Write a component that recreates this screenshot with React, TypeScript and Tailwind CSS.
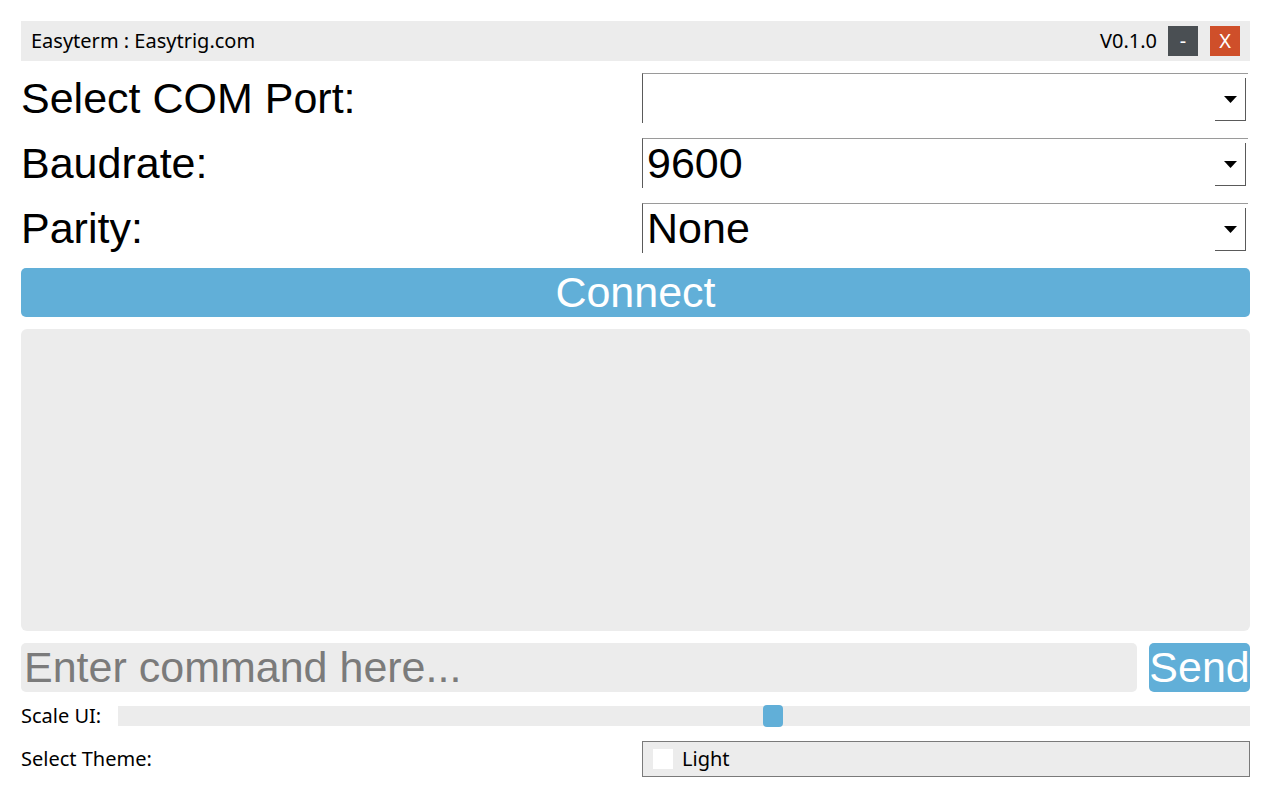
const SANS = "font-['Noto_Sans',sans-serif]";
const ARIAL = "font-['Liberation_Sans',Arial,sans-serif]";

function Combo({ value }: { value?: string }) {
  return (
    <div className="flex h-[50px] w-[606px] items-stretch border-l border-t border-l-[#5a5a5a] border-t-[#9a9a9a] bg-white">
      <div className={`flex flex-1 items-center pl-[4px] text-[43px] leading-none text-black ${ARIAL}`}>
        {value}
      </div>
      <div className="mb-[2px] mr-[2px] mt-[4px] flex w-[31px] items-center justify-center border-b border-r border-[#5a5a5a]">
        <svg width="13" height="7" viewBox="0 0 13 7">
          <path d="M0 0h13L6.5 7z" fill="#000" />
        </svg>
      </div>
    </div>
  );
}

export default function App() {
  const rows: { label: string; value?: string }[] = [
    { label: "Select COM Port:" },
    { label: "Baudrate:", value: "9600" },
    { label: "Parity:", value: "None" },
  ];

  return (
    <div className="min-h-[795px] w-[1272px] bg-white pl-[21px] pr-[22px] pt-[21px]">
      <div className={`flex h-[40px] items-center bg-[#ececec] pl-[10px] pr-[10px] text-[20px] text-black ${SANS}`}>
        <span>Easyterm : Easytrig.com</span>
        <span className="ml-auto">V0.1.0</span>
        <button type="button" className="ml-[11px] flex h-[30px] w-[30px] items-center justify-center bg-[#4a4f53] text-[20px] text-white">
          -
        </button>
        <button type="button" className="ml-[12px] flex h-[30px] w-[30px] items-center justify-center bg-[#cf4f2a] text-[20px] text-white">
          X
        </button>
      </div>

      <div className="mt-[12px] flex flex-col gap-[15px]">
        {rows.map((row) => (
          <div key={row.label} className="flex h-[50px] items-center">
            <div className={`w-[621px] text-[43px] leading-none text-black ${ARIAL}`}>{row.label}</div>
            <Combo value={row.value} />
          </div>
        ))}
      </div>

      <button
        type="button"
        className={`mt-[15px] flex h-[49px] w-full items-center justify-center rounded-[5px] bg-[#61afd8] text-[43px] leading-none text-white ${ARIAL}`}
      >
        Connect
      </button>

      <div className="mt-[12px] h-[302px] rounded-[6px] bg-[#ececec]" />

      <div className="mt-[12px] flex h-[49px] gap-[12px]">
        <div className={`flex flex-1 items-center rounded-[5px] bg-[#ececec] pl-[3px] text-[43px] leading-none text-[#7b7b7b] ${ARIAL}`}>
          Enter command here...
        </div>
        <button
          type="button"
          className={`flex w-[101px] items-center justify-center rounded-[5px] bg-[#61afd8] text-[43px] leading-none text-white ${ARIAL}`}
        >
          Send
        </button>
      </div>

      <div className={`mt-[14px] flex h-[20px] items-center text-[20px] text-black ${SANS}`}>
        <div className="w-[97px]">Scale UI:</div>
        <div className="relative h-[20px] flex-1 bg-[#ececec]">
          <div className="absolute left-[645px] top-[-1px] h-[22px] w-[20px] rounded-[4px] bg-[#61afd8]" />
        </div>
      </div>

      <div className={`mt-[15px] flex h-[36px] items-center text-[20px] text-black ${SANS}`}>
        <div className="w-[621px]">Select Theme:</div>
        <div className="flex h-[36px] flex-1 items-center gap-[9px] border border-[#7a7a7a] bg-[#ececec] pl-[10px]">
          <div className="h-[20px] w-[20px] bg-white" />
          <span>Light</span>
        </div>
      </div>
    </div>
  );
}
